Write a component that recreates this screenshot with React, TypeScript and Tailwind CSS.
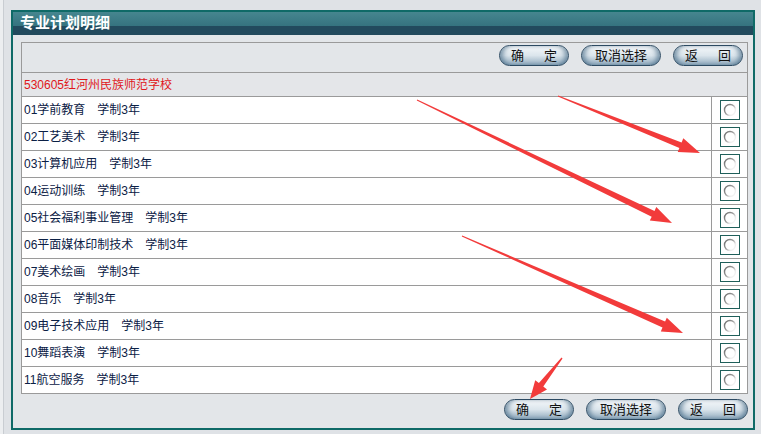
import React from "react";

type Arrow = { from: [number, number]; to: [number, number]; head: number; wing: number; tail: number; neck: number };

const majors = [
  "01学前教育",
  "02工艺美术",
  "03计算机应用",
  "04运动训练",
  "05社会福利事业管理",
  "06平面媒体印制技术",
  "07美术绘画",
  "08音乐",
  "09电子技术应用",
  "10舞蹈表演",
  "11航空服务",
];

// red hand-drawn markers over the list
const arrows: Arrow[] = [
  { from: [558, 96], to: [700, 153], head: 21, wing: 7.5, tail: 0.5, neck: 3 },
  { from: [417, 100], to: [672, 223], head: 21, wing: 7.5, tail: 0.5, neck: 3.2 },
  { from: [462, 236], to: [683, 333], head: 21, wing: 7.5, tail: 0.5, neck: 3.2 },
  { from: [562, 358], to: [530, 399], head: 18, wing: 7.5, tail: 0.6, neck: 2.8 },
];

function arrowPoints({ from, to, head, wing, tail, neck }: Arrow) {
  const [sx, sy] = from;
  const [tx, ty] = to;
  const len = Math.hypot(tx - sx, ty - sy);
  const ux = (tx - sx) / len;
  const uy = (ty - sy) / len;
  const nx = -uy;
  const ny = ux;
  const bx = tx - ux * head;
  const by = ty - uy * head;
  const p = (x: number, y: number) => `${x.toFixed(1)},${y.toFixed(1)}`;
  return [
    p(sx + nx * tail, sy + ny * tail),
    p(bx + nx * neck, by + ny * neck),
    p(bx + nx * wing, by + ny * wing),
    p(tx, ty),
    p(bx - nx * wing, by - ny * wing),
    p(bx - nx * neck, by - ny * neck),
    p(sx - nx * tail, sy - ny * tail),
  ].join(" ");
}

function PillButton({ label, width, spread }: { label: string; width: string; spread?: boolean }) {
  const chars = spread ? label.split("") : [label];
  return (
    <button
      type="button"
      className={`${width} h-[21px] rounded-full border border-[#2c4a62] bg-linear-to-b from-[#f5f8fa] via-[#dbe5ec] to-[#91abbe] shadow-[inset_5px_0_5px_-2px_rgba(50,90,120,0.6),inset_-5px_0_5px_-2px_rgba(50,90,120,0.6)] text-[13px] leading-none text-[#111] flex items-center ${
        spread ? "justify-between px-[11px]" : "justify-center"
      }`}
    >
      {chars.map((c, i) => (
        <span key={i}>{c}</span>
      ))}
    </button>
  );
}

function ButtonBar() {
  return (
    <div className="flex gap-[12px]">
      <PillButton label="确定" width="w-[70px]" spread />
      <PillButton label="取消选择" width="w-[80px]" />
      <PillButton label="返回" width="w-[70px]" spread />
    </div>
  );
}

function RadioBox() {
  return (
    <div className="w-[20px] h-[20px] border border-[#1f5f5a] bg-white flex items-center justify-center">
      <svg width="14" height="14" viewBox="0 0 14 14">
        <defs>
          <linearGradient id="rg" x1="0" y1="0.1" x2="1" y2="0.9">
            <stop offset="0" stopColor="#6c6c6c" />
            <stop offset="0.45" stopColor="#9c9c9c" />
            <stop offset="0.75" stopColor="#ededed" />
            <stop offset="1" stopColor="#f7f7f7" />
          </linearGradient>
        </defs>
        <circle cx="7" cy="7" r="5.5" fill="#fff" stroke="url(#rg)" strokeWidth="1.4" />
      </svg>
    </div>
  );
}

export default function App() {
  return (
    <div
      className="relative w-[761px] h-[434px] overflow-hidden bg-[#dfe2e6] flex"
      style={{ fontFamily: '"Liberation Sans", "Noto Sans CJK SC", sans-serif' }}
    >
      <div className="w-[3px] h-full bg-[#eceef0]" />
      <div className="w-px h-full bg-[#c9cdd2]" />

      <div className="ml-[7px] mt-[10px] w-[744px] h-[420px] border-2 border-[#0f6a67] bg-[#e3e6e9] flex flex-col">
        <div className="h-[23px] flex flex-col relative">
          <div className="h-[14px] bg-linear-to-b from-[#46868f] to-[#35737f]" />
          <div className="flex-1 bg-[#224a5d]" />
          <span className="absolute left-[7px] top-0 h-full flex items-center text-[15px] font-bold text-white">
            专业计划明细
          </span>
        </div>

        <div className="pl-[8px] pr-[5px] pt-[7px] flex flex-col">
          <div className="border border-[#9a9a9a] flex flex-col">
            <div className="h-[29px] flex justify-end items-start pt-[2px] pr-[4px]">
              <ButtonBar />
            </div>
            <div className="h-[24px] border-t border-[#9a9a9a] bg-[#e4e6e9] flex items-center pl-[2px] text-[12px] text-[#e0161a]">
              530605红河州民族师范学校
            </div>
            {majors.map((m) => (
              <div key={m} className="h-[27px] border-t border-[#9a9a9a] bg-white flex">
                <div className="flex-1 flex items-center pl-[2px] text-[12px] text-[#0b2045] whitespace-pre">
                  {m}　学制3年
                </div>
                <div className="w-[36px] border-l border-[#9a9a9a] flex items-center justify-center">
                  <RadioBox />
                </div>
              </div>
            ))}
          </div>
          <div className="flex justify-end pt-[5px]">
            <ButtonBar />
          </div>
        </div>
      </div>

      <svg className="absolute inset-0 pointer-events-none" width="761" height="434">
        {arrows.map((a, i) => (
          <polygon key={i} points={arrowPoints(a)} fill="#f23b3b" />
        ))}
      </svg>
    </div>
  );
}
